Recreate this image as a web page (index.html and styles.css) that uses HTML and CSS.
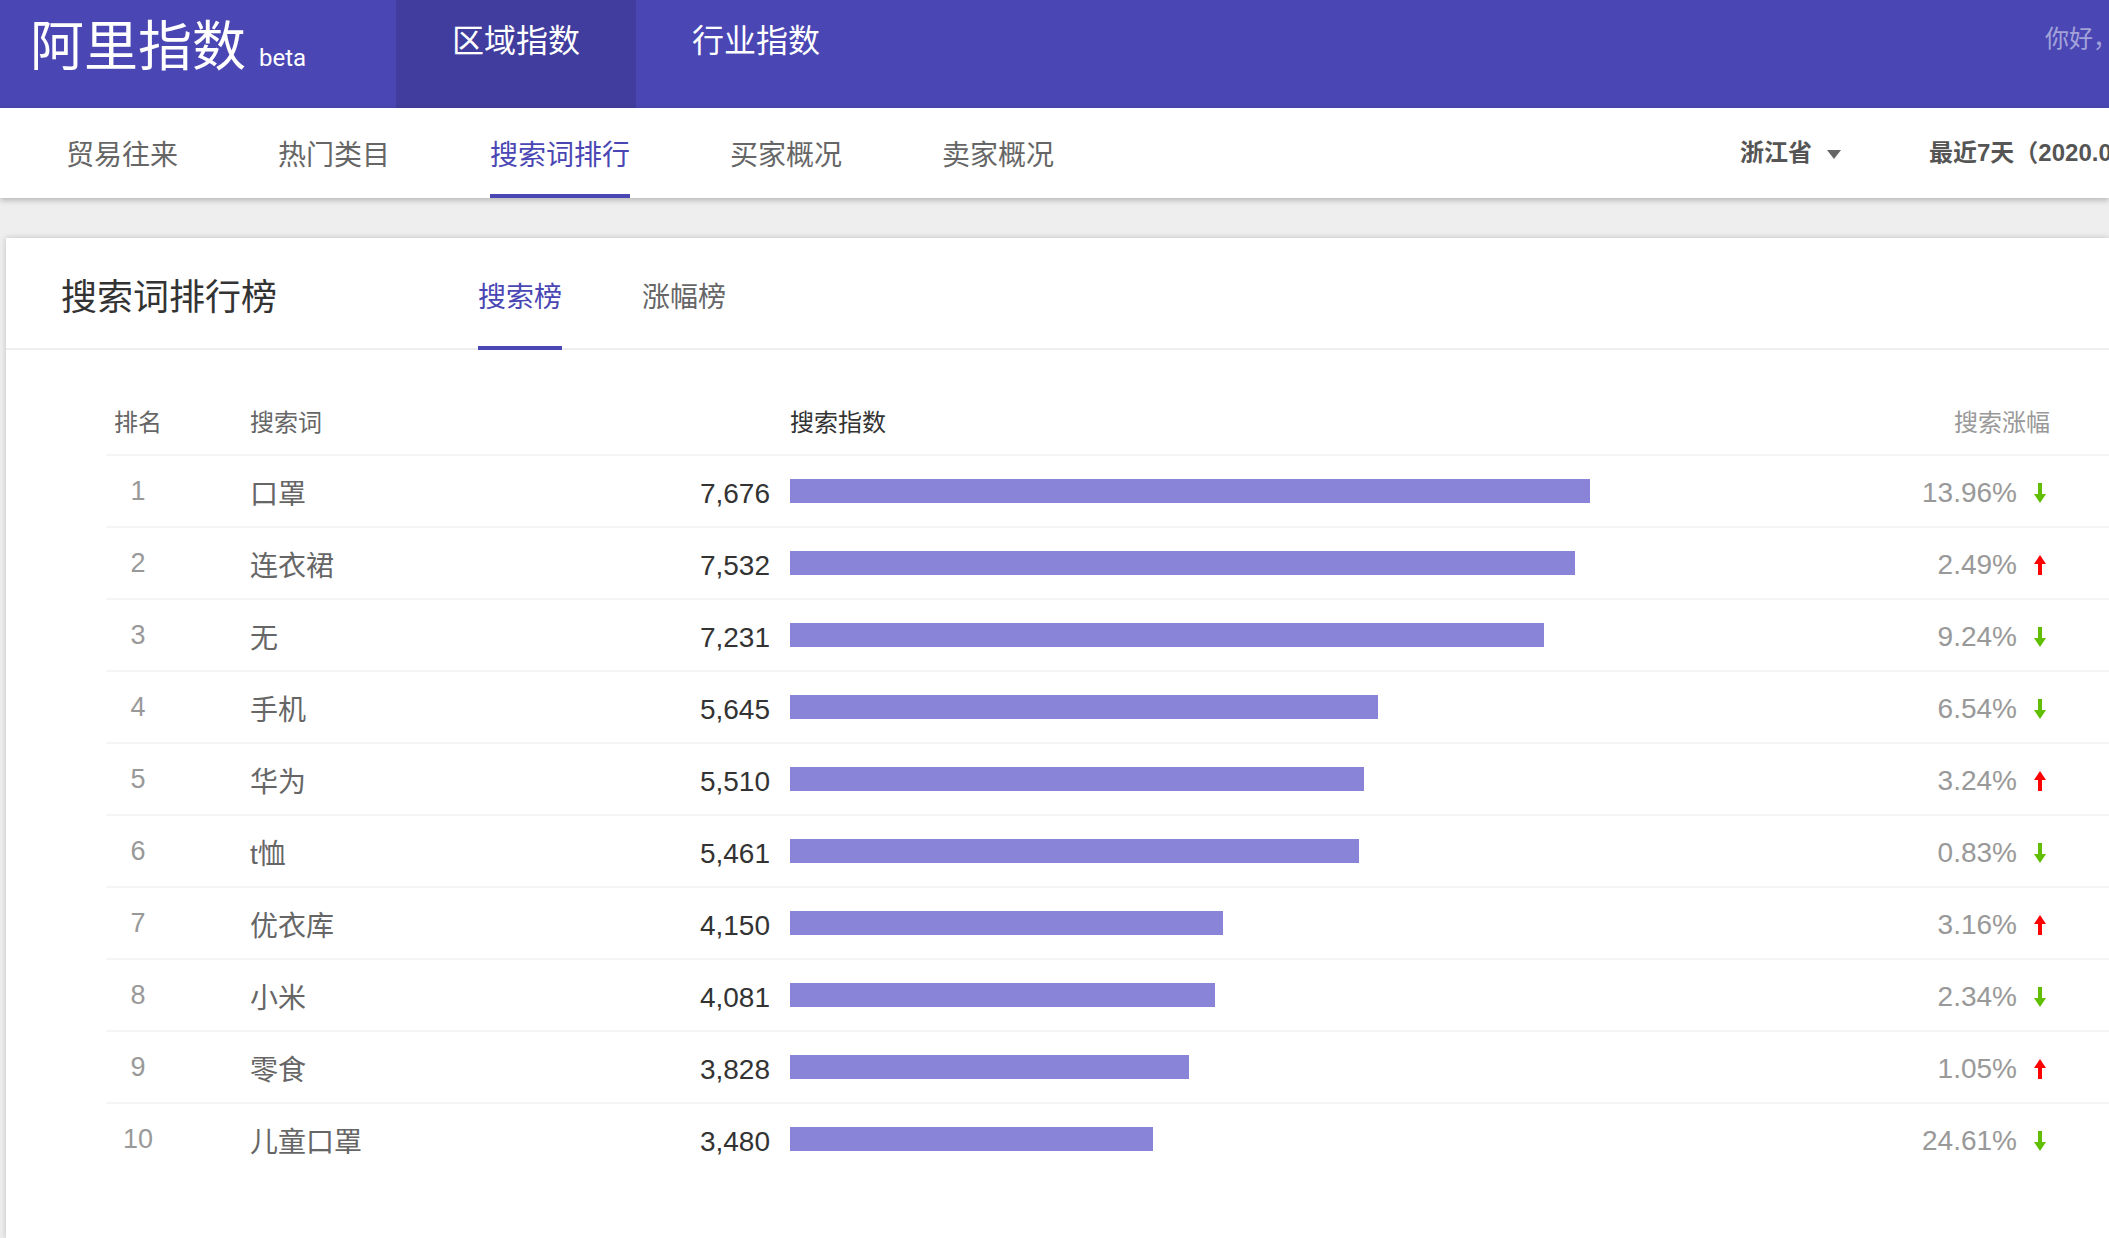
FILE: index.html
```html
<!DOCTYPE html>
<html lang="zh-CN">
<head>
  <meta charset="UTF-8">
  <title>阿里指数</title>
  <link rel="stylesheet" href="styles.css">
</head>
<body>
  <header class="topbar">
    <div class="logo"><span class="logo-name">阿里指数</span><span class="logo-beta">beta</span></div>
    <nav class="main-nav">
      <a class="main-nav-item active">区域指数</a>
      <a class="main-nav-item">行业指数</a>
    </nav>
    <div class="greeting">你好，</div>
  </header>

  <div class="subbar">
    <nav class="sub-nav">
      <a class="sub-nav-item">贸易往来</a>
      <a class="sub-nav-item">热门类目</a>
      <a class="sub-nav-item active">搜索词排行</a>
      <a class="sub-nav-item">买家概况</a>
      <a class="sub-nav-item">卖家概况</a>
    </nav>
    <div class="filters">
      <span class="filter-region">浙江省<i class="caret"></i></span>
      <span class="filter-date">最近7天（2020.0</span>
    </div>
  </div>

  <section class="card">
    <div class="card-head">
      <h2 class="card-title">搜索词排行榜</h2>
      <div class="tabs">
        <a class="tab active">搜索榜</a>
        <a class="tab">涨幅榜</a>
      </div>
    </div>

    <div class="rank-table">
      <div class="rank-head">
        <span class="col-rank">排名</span>
        <span class="col-term">搜索词</span>
        <span class="col-index">搜索指数</span>
        <span class="col-change">搜索涨幅</span>
      </div>

      <div class="rank-row">
        <span class="rank">1</span><span class="term">口罩</span><span class="num">7,676</span>
        <span class="bar-cell"><span class="bar" style="width: 800px"></span></span>
        <span class="pct">13.96%<svg class="arrow down" viewBox="0 0 12 20"><path d="M4 0h4v11h4l-6 9-6-9h4z"/></svg></span>
      </div>
      <div class="rank-row">
        <span class="rank">2</span><span class="term">连衣裙</span><span class="num">7,532</span>
        <span class="bar-cell"><span class="bar" style="width: 785px"></span></span>
        <span class="pct">2.49%<svg class="arrow up" viewBox="0 0 12 20"><path d="M4 20h4V9h4L6 0 0 9h4z"/></svg></span>
      </div>
      <div class="rank-row">
        <span class="rank">3</span><span class="term">无</span><span class="num">7,231</span>
        <span class="bar-cell"><span class="bar" style="width: 754px"></span></span>
        <span class="pct">9.24%<svg class="arrow down" viewBox="0 0 12 20"><path d="M4 0h4v11h4l-6 9-6-9h4z"/></svg></span>
      </div>
      <div class="rank-row">
        <span class="rank">4</span><span class="term">手机</span><span class="num">5,645</span>
        <span class="bar-cell"><span class="bar" style="width: 588px"></span></span>
        <span class="pct">6.54%<svg class="arrow down" viewBox="0 0 12 20"><path d="M4 0h4v11h4l-6 9-6-9h4z"/></svg></span>
      </div>
      <div class="rank-row">
        <span class="rank">5</span><span class="term">华为</span><span class="num">5,510</span>
        <span class="bar-cell"><span class="bar" style="width: 574px"></span></span>
        <span class="pct">3.24%<svg class="arrow up" viewBox="0 0 12 20"><path d="M4 20h4V9h4L6 0 0 9h4z"/></svg></span>
      </div>
      <div class="rank-row">
        <span class="rank">6</span><span class="term">t恤</span><span class="num">5,461</span>
        <span class="bar-cell"><span class="bar" style="width: 569px"></span></span>
        <span class="pct">0.83%<svg class="arrow down" viewBox="0 0 12 20"><path d="M4 0h4v11h4l-6 9-6-9h4z"/></svg></span>
      </div>
      <div class="rank-row">
        <span class="rank">7</span><span class="term">优衣库</span><span class="num">4,150</span>
        <span class="bar-cell"><span class="bar" style="width: 433px"></span></span>
        <span class="pct">3.16%<svg class="arrow up" viewBox="0 0 12 20"><path d="M4 20h4V9h4L6 0 0 9h4z"/></svg></span>
      </div>
      <div class="rank-row">
        <span class="rank">8</span><span class="term">小米</span><span class="num">4,081</span>
        <span class="bar-cell"><span class="bar" style="width: 425px"></span></span>
        <span class="pct">2.34%<svg class="arrow down" viewBox="0 0 12 20"><path d="M4 0h4v11h4l-6 9-6-9h4z"/></svg></span>
      </div>
      <div class="rank-row">
        <span class="rank">9</span><span class="term">零食</span><span class="num">3,828</span>
        <span class="bar-cell"><span class="bar" style="width: 399px"></span></span>
        <span class="pct">1.05%<svg class="arrow up" viewBox="0 0 12 20"><path d="M4 20h4V9h4L6 0 0 9h4z"/></svg></span>
      </div>
      <div class="rank-row">
        <span class="rank">10</span><span class="term">儿童口罩</span><span class="num">3,480</span>
        <span class="bar-cell"><span class="bar" style="width: 363px"></span></span>
        <span class="pct">24.61%<svg class="arrow down" viewBox="0 0 12 20"><path d="M4 0h4v11h4l-6 9-6-9h4z"/></svg></span>
      </div>
    </div>
  </section>
</body>
</html>
```

FILE: styles.css
```css
html, body {
  height: 100%;
}
body {
  margin: 0;
  display: flex;
  flex-direction: column;
  overflow: hidden;
  background: #eee;
  font-family: "Liberation Sans", "Noto Sans CJK SC", sans-serif;
  color: #666;
}

/* top bar */
.topbar {
  display: flex;
  flex: none;
  height: 108px;
  background: #4a47b4;
  color: #fff;
}
.logo {
  width: 396px;
  flex: none;
  padding-left: 30px;
  box-sizing: border-box;
  height: 108px;
  line-height: 94px;
  white-space: nowrap;
}
.logo-name {
  font-size: 54px;
}
.logo-beta {
  margin-left: 13px;
  font-family: Roboto, sans-serif;
  font-size: 24px;
}
.main-nav {
  display: flex;
}
.main-nav-item {
  width: 240px;
  text-align: center;
  font-size: 32px;
  line-height: 82px;
}
.main-nav-item.active {
  background: #413d9e;
}
.greeting {
  margin-left: auto;
  width: 64px;
  overflow: hidden;
  white-space: nowrap;
  font-size: 24px;
  line-height: 78px;
  color: rgba(255, 255, 255, 0.5);
}

/* second bar */
.subbar {
  display: flex;
  flex: none;
  justify-content: space-between;
  height: 90px;
  background: #fff;
  box-shadow: 0 2px 6px rgba(0, 0, 0, 0.25);
  position: relative;
}
.sub-nav {
  display: flex;
  gap: 100px;
  padding-left: 66px;
}
.sub-nav-item {
  height: 86px;
  line-height: 96px;
  font-size: 28px;
  white-space: nowrap;
}
.sub-nav-item.active {
  color: #4a47b4;
  border-bottom: 4px solid #4a47b4;
}
.filters {
  display: flex;
  width: 369px;
  flex: none;
  overflow: hidden;
  white-space: nowrap;
  font-size: 24px;
  font-weight: bold;
  line-height: 90px;
  color: #555;
}
.filter-region {
  display: flex;
  align-items: center;
  width: 189px;
  flex: none;
}
.caret {
  margin: 2px 0 0 15px;
  border-top: 9px solid #666;
  border-left: 7px solid transparent;
  border-right: 7px solid transparent;
}

/* ranking card */
.card {
  flex: 1;
  margin: 40px 0 0 6px;
  background: #fff;
  box-shadow: 0 0 6px rgba(0, 0, 0, 0.2);
}
.card-head {
  display: flex;
  height: 110px;
  padding-left: 55px;
  border-bottom: 2px solid #eee;
}
.card-title {
  width: 417px;
  margin: 0;
  font-size: 36px;
  font-weight: normal;
  line-height: 120px;
  color: #333;
}
.tabs {
  display: flex;
  gap: 80px;
}
.tab {
  height: 108px;
  line-height: 120px;
  font-size: 28px;
  margin-bottom: -2px;
}
.tab.active {
  color: #4a47b4;
  border-bottom: 4px solid #4a47b4;
}

.rank-table {
  padding: 48px 0 0 100px;
}
.rank-head {
  display: flex;
  height: 56px;
  line-height: 50px;
  font-size: 24px;
  border-bottom: 2px solid #f5f5f5;
}
.col-rank {
  width: 144px;
  padding-left: 8px;
  box-sizing: border-box;
}
.col-term {
  width: 540px;
}
.col-index {
  color: #333;
}
.col-change {
  margin-left: auto;
  margin-right: 59px;
  color: #999;
}
.rank-row {
  display: flex;
  align-items: center;
  height: 70px;
  padding-right: 63px;
  border-bottom: 2px solid #f5f5f5;
}
.rank-row:last-child {
  border-bottom: none;
}
.rank {
  width: 64px;
  margin-right: 80px;
  text-align: center;
  font-size: 27px;
  color: #999;
}
.term {
  width: 340px;
  font-size: 28px;
  position: relative;
  top: 1px;
}
.num {
  width: 180px;
  margin-right: 20px;
  text-align: right;
  font-size: 28px;
  color: #333;
  position: relative;
  top: 3px;
}
.bar-cell {
  flex: 1;
  display: flex;
}
.bar {
  height: 24px;
  background: #8a84d8;
}
.pct {
  display: flex;
  align-items: center;
  font-size: 28px;
  color: #999;
  position: relative;
  top: 2px;
}
.pct svg {
  position: relative;
  top: 0;
}
.arrow {
  width: 12px;
  height: 20px;
  margin-left: 17px;
}
.arrow.down {
  fill: #5fbf00;
}
.arrow.up {
  fill: #ff0000;
}
```
